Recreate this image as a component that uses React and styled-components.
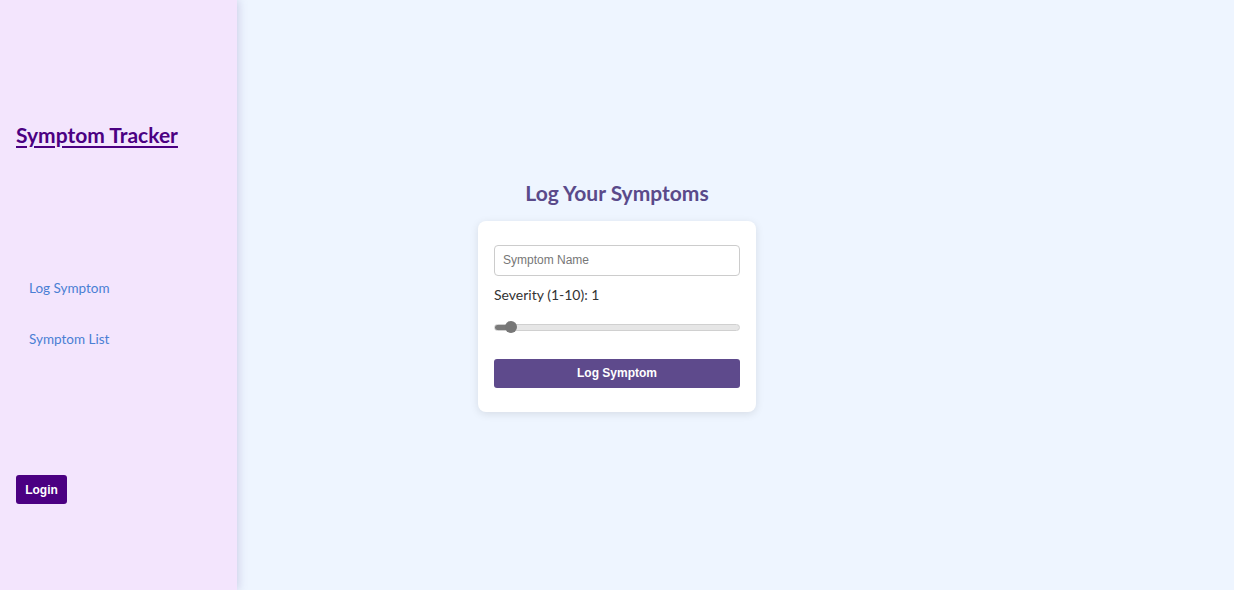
import React, { useState } from "react";
import styled, { createGlobalStyle } from "styled-components";

const GlobalStyle = createGlobalStyle`
    html, body {
        margin: 0;
        padding: 0;
        height: 100%;
    }
    body {
        font-family: "Lato", "Open Sans", sans-serif;
        background-color: #eef5ff;
    }
    #root {
        height: 100%;
    }
`;

const Page = styled.div`
    display: flex;
    height: 590px;
`;

const Sidebar = styled.nav`
    width: 237px;
    flex-shrink: 0;
    background-color: #f3e5fd;
    box-shadow: 2px 0 8px rgba(120, 110, 170, 0.25);
    box-sizing: border-box;
    padding: 0 16px;
    display: flex;
    flex-direction: column;
    position: relative;
    z-index: 1;
`;

const Brand = styled.a`
    margin-top: 120px;
    font-size: 21px;
    font-weight: bold;
    color: #4b0082;
    text-decoration: underline;
    text-underline-offset: 3px;
    line-height: 30px;
    cursor: pointer;
`;

const NavList = styled.ul`
    list-style: none;
    margin: 129px 0 0;
    padding: 0 13px;
    display: flex;
    flex-direction: column;
    gap: 33px;
`;

const NavLink = styled.li`
    font-size: 13.5px;
    color: #4a7fd4;
    line-height: 18px;
    cursor: pointer;
`;

const LoginButton = styled.button`
    margin-top: 127px;
    align-self: flex-start;
    width: 51px;
    height: 29px;
    border: none;
    border-radius: 3px;
    background-color: #4b0082;
    color: #fff;
    font-family: "Liberation Sans", Arial, sans-serif;
    font-weight: bold;
    font-size: 12px;
    cursor: pointer;
`;

const Main = styled.main`
    flex: 1;
    padding: 2px 237px 0 0;
    display: flex;
    flex-direction: column;
    align-items: center;
    justify-content: center;
`;

const Heading = styled.h2`
    margin: 0 0 16px;
    font-size: 21px;
    font-weight: bold;
    color: #5a4a8a;
    line-height: 24px;
`;

const Card = styled.form`
    width: 278px;
    box-sizing: border-box;
    padding: 24px 16px;
    background: #fff;
    border-radius: 8px;
    box-shadow: 0 2px 8px rgba(0, 0, 0, 0.1);
    display: flex;
    flex-direction: column;
`;

const TextInput = styled.input`
    height: 31px;
    box-sizing: border-box;
    padding: 0 8px;
    border: 1px solid #ccc;
    border-radius: 4px;
    font-family: "Liberation Sans", Arial, sans-serif;
    font-size: 12px;
    color: #333;
    &::placeholder {
        color: #777;
    }
`;

const Label = styled.label`
    margin-top: 10px;
    font-size: 14px;
    color: #333;
    line-height: 17px;
`;

const Range = styled.input`
    -webkit-appearance: none;
    appearance: none;
    box-sizing: border-box;
    margin: 21px 0 0;
    padding: 0 0 0 10px;
    height: 7px;
    border: 1px solid #d0d0d0;
    border-radius: 4px;
    background: linear-gradient(to right, #7a7a7a 0, #7a7a7a ${p => p.$fill}, #e6e6e6 ${p => p.$fill});
    outline: none;
    &::-webkit-slider-thumb {
        -webkit-appearance: none;
        appearance: none;
        width: 12px;
        height: 12px;
        border-radius: 50%;
        background: #777;
        border: none;
    }
`;

const SubmitButton = styled.button`
    margin-top: 28px;
    height: 29px;
    border: none;
    border-radius: 3px;
    background-color: #5e4a8c;
    color: #fff;
    font-family: "Liberation Sans", Arial, sans-serif;
    font-weight: bold;
    font-size: 12px;
    cursor: pointer;
`;

const App = () => {
    const [severity, setSeverity] = useState(1);
    const fill = `${16 + ((severity - 1) / 9) * 222}px`;

    return (
        <>
            <GlobalStyle/>
            <Page>
                <Sidebar>
                    <Brand>Symptom Tracker</Brand>
                    <NavList>
                        <NavLink>Log Symptom</NavLink>
                        <NavLink>Symptom List</NavLink>
                    </NavList>
                    <LoginButton>Login</LoginButton>
                </Sidebar>
                <Main>
                    <Heading>Log Your Symptoms</Heading>
                    <Card onSubmit={e => e.preventDefault()}>
                        <TextInput placeholder="Symptom Name"/>
                        <Label>Severity (1-10): {severity}</Label>
                        <Range
                            type="range"
                            min="1"
                            max="10"
                            value={severity}
                            $fill={fill}
                            onChange={e => setSeverity(Number(e.target.value))}
                        />
                        <SubmitButton type="submit">Log Symptom</SubmitButton>
                    </Card>
                </Main>
            </Page>
        </>
    );
}

export default App;
